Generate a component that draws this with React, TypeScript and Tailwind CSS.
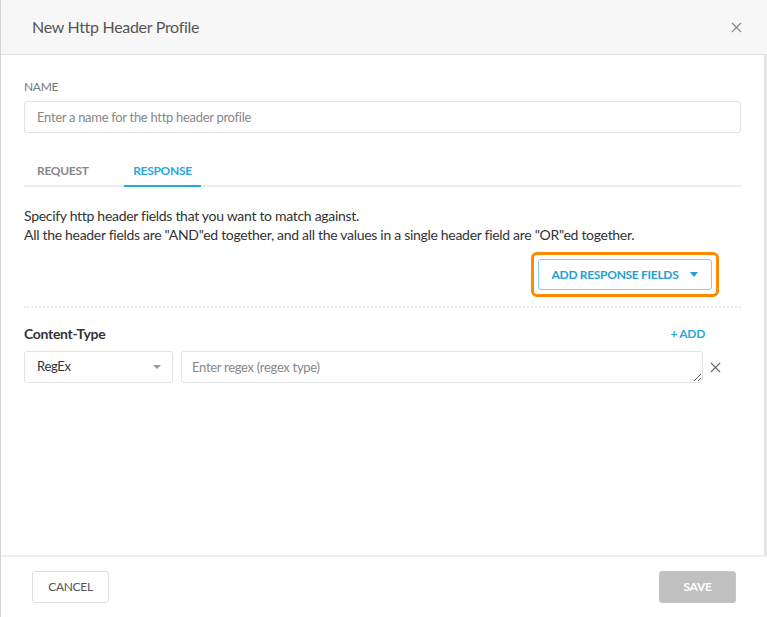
import { X } from "lucide-react";

export default function App() {
  return (
    <div
      className="flex h-[617px] w-[767px] flex-col border-l border-[#d4d4d4] bg-white tracking-[-0.3px]"
      style={{ fontFamily: "Lato, 'Open Sans', sans-serif" }}
    >
      <header className="flex h-[55px] shrink-0 items-center justify-between border-b border-[#e3e3e3] bg-[#f7f7f7] pl-[31px] pr-[22px]">
        <h1 className="text-[16px] text-[#555]">New Http Header Profile</h1>
        <X className="h-[17px] w-[17px] text-[#888]" strokeWidth={1.5} />
      </header>

      <main className="flex-1 border-r-[3px] border-[#e6e6e6] px-[23px] pt-[23px]">
        <label className="block text-[12px] text-[#777]">NAME</label>
        <input
          placeholder="Enter a name for the http header profile"
          className="mt-[5px] h-[32px] w-full rounded-[3px] border border-[#e2e2e2] px-[12px] text-[13px] text-[#333] outline-none placeholder:text-[#888]"
        />

        <div className="mt-[29px] flex border-b-2 border-[#ececec] text-[12px] font-bold">
          <button className="w-[100px] pb-[5px] pl-[13px] text-left text-[#888]">REQUEST</button>
          <button className="-mb-[2px] w-[77px] border-b-2 border-[#26a8dc] pb-[5px] text-[#26a8dc]">
            RESPONSE
          </button>
        </div>

        <div className="mt-[19px] text-[14px] leading-[19px] text-[#333]">
          <p>Specify http header fields that you want to match against.</p>
          <p>All the header fields are "AND"ed together, and all the values in a single header field are "OR"ed together.</p>
        </div>

        <div className="mt-[8px] flex justify-end pr-[22px]">
          <div className="rounded-[6px] border-[3px] border-[#ff8a00] p-[4px]">
            <button className="flex h-[31px] w-[174px] items-center justify-center gap-[12px] rounded-[3px] border border-[#7fd2ee] text-[12px] font-bold text-[#1f9fd3]">
              ADD RESPONSE FIELDS
              <svg width="8" height="5" viewBox="0 0 8 5">
                <path d="M0 0h8L4 5z" fill="#1f9fd3" />
              </svg>
            </button>
          </div>
        </div>

        <div className="mt-[9px] border-t-2 border-dotted border-[#ececec]" />

        <div className="mt-[15px] flex items-center justify-between pr-[36px]">
          <span className="text-[14px] font-bold text-[#333]">Content-Type</span>
          <button className="text-[12px] font-bold text-[#26a8dc]">+ ADD</button>
        </div>

        <div className="mt-[7px] flex items-center">
          <div className="flex h-[32px] w-[149px] items-center justify-between rounded-[3px] border border-[#e2e2e2] pl-[12px] pr-[11px] text-[13px] text-[#333]">
            RegEx
            <svg width="8" height="4" viewBox="0 0 8 4">
              <path d="M0 0h8L4 4z" fill="#999" />
            </svg>
          </div>
          <textarea
            placeholder="Enter regex (regex type)"
            className="ml-[8px] h-[32px] flex-1 resize rounded-[3px] border border-[#e2e2e2] px-[10px] py-[6px] text-[13px] leading-[18px] text-[#333] outline-none placeholder:text-[#888]"
          />
          <X className="ml-[4px] mr-[17px] h-[17px] w-[17px] text-[#666]" strokeWidth={1.5} />
        </div>
      </main>

      <footer className="flex h-[62px] shrink-0 items-start justify-between border-t-2 border-[#eeeeee] pl-[31px] pr-[31px] pt-[14px]">
        <button className="h-[32px] w-[77px] rounded-[3px] border border-[#dedede] text-[12px] text-[#555]">
          CANCEL
        </button>
        <button className="h-[32px] w-[77px] rounded-[3px] border border-[#c6c6c6] bg-[#c0c0c0] text-[12px] font-bold text-white">
          SAVE
        </button>
      </footer>
    </div>
  );
}
